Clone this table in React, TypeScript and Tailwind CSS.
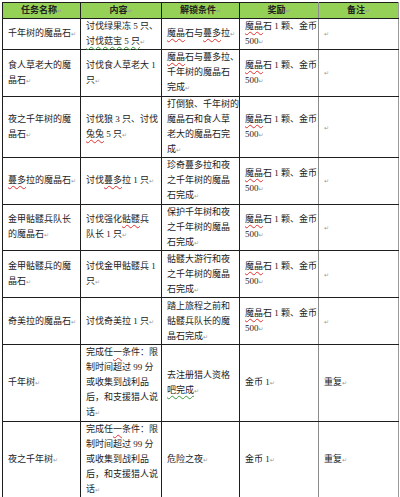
import React from "react";

type Row = { h: string; cells: string[][] };

const repeatCond = ["完成任~一~条件：限", "制时间超过 99 分", "或收集到战利品", "后，和支援猎人说", "话"];

const rows: Row[] = [
  {
    h: "h-[31px]",
    cells: [
      ["千年树的魔晶石"],
      ["讨伐绿果冻 5 只、", "^讨伐菇宝 5 只^"],
      ["~魔晶~石与~蔓多~拉"],
      ["~魔晶~石 1 颗、金币", "500"],
      [""],
    ],
  },
  {
    h: "h-[47px]",
    cells: [
      ["食人草老大的魔", "晶石"],
      ["讨伐食人草老大 1", "只"],
      ["~魔晶~石与蔓多拉、", "千年树的魔晶石", "完成"],
      ["~魔晶~石 1 颗、金币", "500"],
      [""],
    ],
  },
  {
    h: "h-[61px]",
    cells: [
      ["夜之千年树的魔", "晶石"],
      ["讨伐狼 3 只、讨伐", "~兔兔~ 5 只"],
      ["打倒狼、千年树的", "魔晶石和食人草", "老大的魔晶石完", "成"],
      ["~魔晶~石 1 颗、金币", "500"],
      [""],
    ],
  },
  {
    h: "h-[46px]",
    cells: [
      ["~蔓多~拉的魔晶石"],
      ["讨伐~蔓多~拉 1 只"],
      ["珍奇蔓多拉和夜", "之千年树的魔晶", "石完成"],
      ["~魔晶~石 1 颗、金币", "500"],
      [""],
    ],
  },
  {
    h: "h-[46px]",
    cells: [
      ["金甲骷髅兵队长", "的魔晶石"],
      ["讨伐强化~骷髅~兵", "队长 1 只"],
      ["保护千年树和夜", "之千年树的魔晶", "石完成"],
      ["~魔晶~石 1 颗、金币", "500"],
      [""],
    ],
  },
  {
    h: "h-[47px]",
    cells: [
      ["金甲骷髅兵的魔", "晶石"],
      ["讨伐金甲骷髅兵 1", "只"],
      ["骷髅大游行和夜", "之千年树的魔晶", "石完成"],
      ["~魔晶~石 1 颗、金币", "500"],
      [""],
    ],
  },
  {
    h: "h-[47px]",
    cells: [
      ["奇美拉的魔晶石"],
      ["讨伐奇美拉 1 只"],
      ["踏上旅程之前和", "骷髅兵队长的魔", "晶石完成"],
      ["~魔晶~石 1 颗、金币", "500"],
      [""],
    ],
  },
  {
    h: "h-[76px]",
    cells: [["千年树"], repeatCond, ["去注册猎人资格", "^吧完成^"], ["金币 1"], ["重复"]],
  },
  {
    h: "h-[76px]",
    cells: [["夜之千年树"], repeatCond, ["危险之夜"], ["金币 1"], ["重复"]],
  },
];

const headers = ["任务名称", "内容", "解锁条件", "奖励", "备注"];

function Mark() {
  return <span className="font-['DejaVu_Sans',sans-serif] text-[6px] text-[#9a9a9a] align-middle">↵</span>;
}

function renderLine(s: string) {
  const parts = s.split(/(~[^~]+~|\^[^^]+\^)/);
  return parts.map((p, i) => {
    if (p.startsWith("~"))
      return (
        <span key={i} className="underline decoration-wavy decoration-[#e03030] decoration-1 underline-offset-2">
          {p.slice(1, -1)}
        </span>
      );
    if (p.startsWith("^"))
      return (
        <span key={i} className="underline decoration-wavy decoration-[#3a9a3a] decoration-1 underline-offset-2">
          {p.slice(1, -1)}
        </span>
      );
    return <React.Fragment key={i}>{p}</React.Fragment>;
  });
}

function cellBorder(ci: number, last: boolean) {
  let c = "border border-[#1e1e1e]";
  if (ci === 3) c += " border-r-[#8c8c8c]";
  if (ci === 4) c += " border-r-[#9a9a9a]";
  if (last) c += " border-b-2 border-b-[#111]";
  return c;
}

export default function App() {
  return (
    <div className="w-[400px] h-[497px] bg-white pl-[2px] pt-[2px] font-['Liberation_Serif','Noto_Sans_CJK_SC',serif] text-[9px] text-[#1c1c1c]">
      <table className="table-fixed border-collapse w-[397px]">
        <colgroup>
          <col className="w-[78px]" />
          <col className="w-[81px]" />
          <col className="w-[78px]" />
          <col className="w-[79px]" />
          <col className="w-[80px]" />
        </colgroup>
        <thead>
          <tr className="h-[15px] bg-[#96d157]">
            {headers.map((h, i) => (
              <th
                key={h}
                className={`${cellBorder(i, false)} p-0 text-center font-bold leading-[14px] font-['Noto_Sans_CJK_SC',sans-serif] text-[9px] text-[#222]`}
              >
                {h}
                <Mark />
              </th>
            ))}
          </tr>
        </thead>
        <tbody>
          {rows.map((r, ri) => (
            <tr key={ri} className={r.h}>
              {r.cells.map((lines, ci) => (
                <td
                  key={ci}
                  className={`${cellBorder(ci, ri === rows.length - 1)} p-0 pl-[5px] align-middle leading-[15px] whitespace-nowrap`}
                >
                  {lines.map((l, li) => (
                    <div key={li}>
                      {renderLine(l)}
                      {li === lines.length - 1 && <Mark />}
                    </div>
                  ))}
                </td>
              ))}
            </tr>
          ))}
        </tbody>
      </table>
    </div>
  );
}
